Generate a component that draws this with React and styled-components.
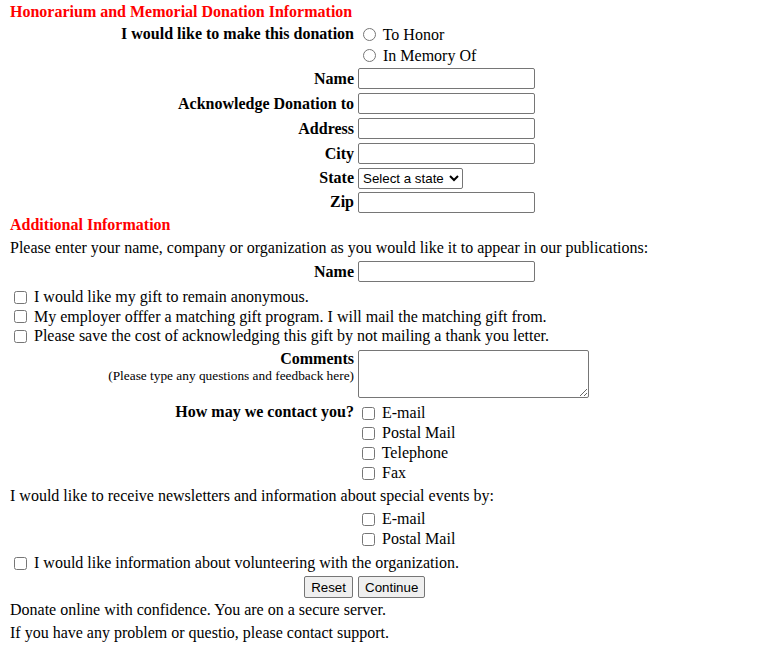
import React from 'react';
import styled, { createGlobalStyle } from 'styled-components';

const GlobalStyle = createGlobalStyle`
    body {
        margin: 0;
        background: #fff;
        color: #000;
        font-family: 'Liberation Serif', 'Times New Roman', serif;
        font-size: 16px;
    }
`;

const STATES = ['Select a state', 'Alabama', 'Alaska', 'Arizona', 'California', 'New York', 'Texas'];

const DonationInfoPage = () => {
    return (
        <StPage>
            <GlobalStyle />
            <StTitle h={22}>Honorarium and Memorial Donation Information</StTitle>

            <StFieldRow top>
                <StLabel pt={2}>I would like to make this donation</StLabel>
                <StOptionList pt={1}>
                    <StOption h={21}>
                        <StRadio type="radio" name="kind" />
                        {' To Honor'}
                    </StOption>
                    <StOption h={21}>
                        <StRadio type="radio" name="kind" />
                        {' In Memory Of'}
                    </StOption>
                </StOptionList>
            </StFieldRow>

            <StFieldRow h={25}>
                <StLabel>Name</StLabel>
                <StTextInput type="text" />
            </StFieldRow>
            <StFieldRow h={25}>
                <StLabel>Acknowledge Donation to</StLabel>
                <StTextInput type="text" />
            </StFieldRow>
            <StFieldRow h={25}>
                <StLabel>Address</StLabel>
                <StTextInput type="text" />
            </StFieldRow>
            <StFieldRow h={25}>
                <StLabel>City</StLabel>
                <StTextInput type="text" />
            </StFieldRow>
            <StFieldRow h={24}>
                <StLabel>State</StLabel>
                <StSelectBox>
                    <StStateSelect defaultValue={STATES[0]}>
                        {STATES.map((s) => (
                            <option key={s}>{s}</option>
                        ))}
                    </StStateSelect>
                </StSelectBox>
            </StFieldRow>
            <StFieldRow h={24}>
                <StLabel>Zip</StLabel>
                <StTextInput type="text" />
            </StFieldRow>

            <StTitle h={22}>Additional Information</StTitle>
            <StText h={23}>
                Please enter your name, company or organization as you would like it to appear in our publications:
            </StText>
            <StFieldRow h={25}>
                <StLabel>Name</StLabel>
                <StTextInput type="text" />
            </StFieldRow>

            <StCheckGroup>
                <StCheckLine h={20}>
                    <StCheck type="checkbox" />
                    {' I would like my gift to remain anonymous.'}
                </StCheckLine>
                <StCheckLine h={19}>
                    <StCheck type="checkbox" />
                    {' My employer offfer a matching gift program. I will mail the matching gift from.'}
                </StCheckLine>
                <StCheckLine h={20}>
                    <StCheck type="checkbox" />
                    {' Please save the cost of acknowledging this gift by not mailing a thank you letter.'}
                </StCheckLine>
            </StCheckGroup>

            <StFieldRow top h={56}>
                <StLabelStack>
                    <StLabel pt={4}>Comments</StLabel>
                    <StNote>(Please type any questions and feedback here)</StNote>
                </StLabelStack>
                <StComments />
            </StFieldRow>

            <StFieldRow top>
                <StLabel pt={1}>How may we contact you?</StLabel>
                <StOptionList pt={1}>
                    {['E-mail', 'Postal Mail', 'Telephone', 'Fax'].map((o) => (
                        <StOption key={o} h={20}>
                            <StCheck type="checkbox" />
                            {` ${o}`}
                        </StOption>
                    ))}
                </StOptionList>
            </StFieldRow>

            <StText h={25}>I would like to receive newsletters and information about special events by:</StText>
            <StFieldRow top>
                <span />
                <StOptionList pt={1} pb={1}>
                    {['E-mail', 'Postal Mail'].map((o) => (
                        <StOption key={o} h={20}>
                            <StCheck type="checkbox" />
                            {` ${o}`}
                        </StOption>
                    ))}
                </StOptionList>
            </StFieldRow>

            <StCheckLine h={26}>
                <StCheck type="checkbox" />
                {' I would like information about volunteering with the organization.'}
            </StCheckLine>

            <StFieldRow h={22}>
                <StButtonCell>
                    <StButton type="reset">Reset</StButton>
                </StButtonCell>
                <div>
                    <StButton type="button">Continue</StButton>
                </div>
            </StFieldRow>

            <StText h={23}>Donate online with confidence. You are on a secure server.</StText>
            <StText h={23}>If you have any problem or questio, please contact support.</StText>
        </StPage>
    );
};

export default DonationInfoPage;

const StPage = styled.form`
    display: flex;
    flex-direction: column;
    padding: 1px 0 0 10px;
    width: 660px;
`;

const StTitle = styled.div`
    height: ${(p) => p.h}px;
    display: flex;
    align-items: center;
    color: #ff0000;
    font-weight: bold;
    line-height: 18px;
`;

const StText = styled.div`
    height: ${(p) => p.h}px;
    display: flex;
    align-items: center;
    line-height: 18px;
    white-space: nowrap;
`;

const StFieldRow = styled.div`
    display: grid;
    grid-template-columns: 344px 1fr;
    column-gap: 4px;
    align-items: ${(p) => (p.top ? 'start' : 'center')};
    ${(p) => (p.h ? `height: ${p.h}px;` : '')}
`;

const StLabel = styled.div`
    font-weight: bold;
    text-align: right;
    line-height: 18px;
    padding-top: ${(p) => p.pt || 0}px;
    white-space: nowrap;
`;

const StLabelStack = styled.div`
    display: flex;
    flex-direction: column;
    align-items: flex-end;
`;

const StNote = styled.div`
    font-size: 13.33px;
    line-height: 16px;
    text-align: right;
    white-space: nowrap;
`;

const StOptionList = styled.div`
    display: flex;
    flex-direction: column;
    padding-top: ${(p) => p.pt || 0}px;
    padding-bottom: ${(p) => p.pb || 0}px;
`;

const StOption = styled.label`
    height: ${(p) => p.h}px;
    display: flex;
    align-items: center;
    line-height: 18px;
    white-space: pre;
`;

const StRadio = styled.input`
    width: 13px;
    height: 13px;
    margin: 0 3px 0 5px;
`;

const StCheck = styled.input`
    width: 13px;
    height: 13px;
    margin: 0 3px 0 4px;
`;

const StCheckGroup = styled.div`
    display: flex;
    flex-direction: column;
    padding-top: 3px;
`;

const StCheckLine = styled.label`
    height: ${(p) => p.h}px;
    display: flex;
    align-items: center;
    line-height: 18px;
    white-space: pre;
`;

const StTextInput = styled.input`
    box-sizing: border-box;
    width: 177px;
    height: 21px;
    margin: 0;
    padding: 1px 2px;
    border: 1px solid #767676;
    border-radius: 2px;
    font-family: 'Liberation Sans', Arial, sans-serif;
    font-size: 13.33px;
`;

const StSelectBox = styled.div`
    display: flex;
`;

const StStateSelect = styled.select`
    box-sizing: border-box;
    height: 21px;
    width: 105px;
    margin: 0;
    border: 1px solid #767676;
    border-radius: 2px;
    font-family: 'Liberation Sans', Arial, sans-serif;
    font-size: 13.33px;
    color: #000;
    background: #fff;
`;

const StComments = styled.textarea`
    box-sizing: border-box;
    width: 231px;
    height: 48px;
    margin: 4px 0 0 0;
    border: 1px solid #767676;
    border-radius: 2px;
    font-family: 'Liberation Mono', monospace;
    font-size: 13.33px;
`;

const StButtonCell = styled.div`
    display: flex;
    justify-content: flex-end;
    padding-right: 1px;
`;

const StButton = styled.button`
    box-sizing: border-box;
    height: 22px;
    padding: 1px 6px;
    margin: 0;
    border: 1px solid #767676;
    border-radius: 2px;
    background: #efefef;
    color: #000;
    font-family: 'Liberation Sans', Arial, sans-serif;
    font-size: 13.33px;
`;
